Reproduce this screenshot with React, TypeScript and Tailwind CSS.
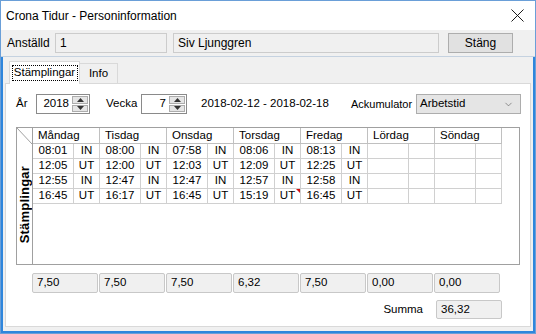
import React from 'react';
import { X, ChevronDown } from 'lucide-react';

type Stamp = { time: string; kind: 'IN' | 'UT'; note?: boolean };

const days = ['Måndag', 'Tisdag', 'Onsdag', 'Torsdag', 'Fredag', 'Lördag', 'Söndag'];

const stamps: Stamp[][] = [
  [
    { time: '08:01', kind: 'IN' },
    { time: '12:05', kind: 'UT' },
    { time: '12:55', kind: 'IN' },
    { time: '16:45', kind: 'UT' },
  ],
  [
    { time: '08:00', kind: 'IN' },
    { time: '12:00', kind: 'UT' },
    { time: '12:47', kind: 'IN' },
    { time: '16:17', kind: 'UT' },
  ],
  [
    { time: '07:58', kind: 'IN' },
    { time: '12:03', kind: 'UT' },
    { time: '12:47', kind: 'IN' },
    { time: '16:45', kind: 'UT' },
  ],
  [
    { time: '08:06', kind: 'IN' },
    { time: '12:09', kind: 'UT' },
    { time: '12:57', kind: 'IN' },
    { time: '15:19', kind: 'UT', note: true },
  ],
  [
    { time: '08:13', kind: 'IN' },
    { time: '12:25', kind: 'UT' },
    { time: '12:58', kind: 'IN' },
    { time: '16:45', kind: 'UT' },
  ],
  [],
  [],
];

const totals = ['7,50', '7,50', '7,50', '6,32', '7,50', '0,00', '0,00'];

function Spinner({ value, width }: { value: string; width: string }) {
  return (
    <div className={`${width} h-[20px] flex items-center border border-[#8a8a8a] bg-white`}>
      <span className="flex-1 text-right pr-[3px] text-[11.5px]">{value}</span>
      <div className="w-[16px] h-[16px] mr-[1px] flex flex-col gap-[1px]">
        <div className="flex-1 flex items-center justify-center bg-[#e5e5e5] border border-[#acacac]">
          <svg width="7" height="4" viewBox="0 0 7 4">
            <path d="M0 4 L3.5 0 L7 4 Z" fill="#333" />
          </svg>
        </div>
        <div className="flex-1 flex items-center justify-center bg-[#e5e5e5] border border-[#acacac]">
          <svg width="7" height="4" viewBox="0 0 7 4">
            <path d="M0 0 L3.5 4 L7 0 Z" fill="#333" />
          </svg>
        </div>
      </div>
    </div>
  );
}

export default function App() {
  const rows = [0, 1, 2, 3];

  return (
    <div
      className="w-[536px] h-[334px] flex flex-col bg-white text-[11px] text-black overflow-hidden border border-[#6a9fd8]"
      style={{ fontFamily: '"Liberation Sans", Arial, sans-serif' }}
    >
      {/* Title bar */}
      <div className="h-[29px] flex items-center justify-between pl-[5px] pr-[6px] bg-white">
        <span className="text-[12px]">Crona Tidur - Personinformation</span>
        <X className="w-[23px] h-[23px] text-[#111]" strokeWidth={1} />
      </div>

      {/* Employee row */}
      <div className="h-[27px] flex items-center bg-[#f0f0f0] border-b border-[#c5d2e0] pl-[6px]">
        <span className="w-[48px] text-[12px]">Anställd</span>
        <div className="w-[112px] h-[20px] flex items-center pl-[4px] bg-[#f0f0f0] border border-[#cccccc] text-[12px]">
          1
        </div>
        <div className="w-[266px] h-[20px] ml-[6px] flex items-center pl-[4px] bg-[#f0f0f0] border border-[#cccccc] text-[12px]">
          Siv Ljunggren
        </div>
        <button className="w-[65px] h-[20px] ml-[9px] flex items-center justify-center bg-[#e1e1e1] border border-[#adadad] text-[12px]">
          Stäng
        </button>
      </div>

      {/* Tab control */}
      <div className="flex-1 flex flex-col bg-[#f0f0f0] border-x-2 border-b-2 border-[#2f86dc] px-[2px] pb-[4px]">
        <div className="h-[26px] flex items-end pl-[4px]">
          <div className="h-[23px] w-[71px] -mb-px z-10 bg-white border border-b-0 border-[#d9d9d9] flex items-center justify-center">
            <span className="w-[66px] h-[16px] flex items-center justify-center border border-dotted border-black text-[11.5px]">Stämplingar</span>
          </div>
          <div className="h-[20px] w-[38px] bg-[#f0f0f0] border border-l-0 border-b-0 border-[#d9d9d9] flex items-center justify-center text-[11.5px]">
            Info
          </div>
        </div>

        <div className="flex-1 bg-white border border-[#d9d9d9] pl-[10px] pt-[10px]">
          {/* Controls */}
          <div className="h-[20px] flex items-center">
            <span className="w-[20px] text-[11.5px]">År</span>
            <Spinner value="2018" width="w-[54px]" />
            <span className="ml-[16px] w-[35px] text-[11.5px]">Vecka</span>
            <Spinner value="7" width="w-[46px]" />
            <span className="ml-[14px] w-[150px] text-[11.5px]">2018-02-12 - 2018-02-18</span>
            <span className="w-[65px] text-[11px]">Ackumulator</span>
            <div className="w-[105px] h-[20px] flex items-center justify-between pl-[3px] pr-[6px] bg-[#e5e5e5] border border-[#adadad] text-[11.5px]">
              <span>Arbetstid</span>
              <ChevronDown className="w-[11px] h-[11px] text-[#555]" strokeWidth={1.3} />
            </div>
          </div>

          {/* Grid */}
          <div className="mt-[13px] w-[504px] h-[138px] flex border border-[#a0a0a0]">
            <div className="w-[16px] flex flex-col border-r border-[#a0a0a0]">
              <svg width="15" height="16" viewBox="0 0 15 16" className="shrink-0">
                <line x1="0" y1="0" x2="15" y2="16" stroke="#a0a0a0" strokeWidth="1" />
              </svg>
              <div className="flex-1 flex items-center justify-center pt-[2px]">
                <span className="[writing-mode:vertical-rl] rotate-180 font-bold text-[13px] leading-[14px] tracking-[0.2px]">
                  Stämplingar
                </span>
              </div>
            </div>
            <div className="flex-1 flex flex-col">
              <div className="flex h-[16px]">
                {days.map((d) => (
                  <div key={d} className="w-[67px] h-[16px] pl-[5px] flex items-center border-r border-b border-[#c0c0c0] text-[11.5px]">
                    {d}
                  </div>
                ))}
              </div>
              {rows.map((r) => (
                <div key={r} className="flex h-[15px]">
                  {stamps.map((col, i) => {
                    const s = col[r];
                    return (
                      <div key={i} className="flex">
                        <div className="w-[41px] h-[15px] flex items-center justify-center border-r border-b border-[#d0d0d0] text-[11.5px]">
                          {s?.time}
                        </div>
                        <div className="relative w-[26px] h-[15px] flex items-center justify-center border-r border-b border-[#d0d0d0] text-[11.5px]">
                          {s?.kind}
                          {s?.note && (
                            <svg width="4" height="4" viewBox="0 0 4 4" className="absolute top-0 right-0">
                              <path d="M0 0 L4 0 L4 4 Z" fill="#d01010" />
                            </svg>
                          )}
                        </div>
                      </div>
                    );
                  })}
                </div>
              ))}
            </div>
          </div>

          {/* Totals */}
          <div className="mt-[8px] flex gap-[1px] pl-[16px]">
            {totals.map((t, i) => (
              <div key={i} className="w-[66px] h-[20px] flex items-center pl-[4px] bg-[#f0f0f0] border border-[#c8c8c8] rounded-[2px] text-[11.5px]">
                {t}
              </div>
            ))}
          </div>

          <div className="mt-[7px] w-[486px] flex items-center justify-end gap-[13px]">
            <span className="text-[11.5px]">Summa</span>
            <div className="w-[66px] h-[19px] flex items-center pl-[4px] bg-[#f0f0f0] border border-[#c8c8c8] rounded-[2px] text-[11.5px]">
              36,32
            </div>
          </div>
        </div>
      </div>
    </div>
  );
}
